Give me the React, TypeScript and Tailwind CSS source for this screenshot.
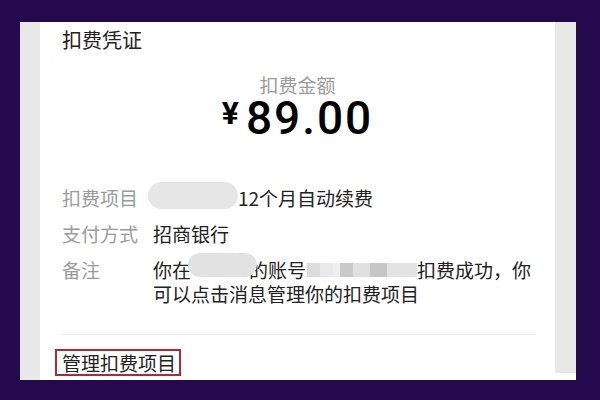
import React from "react";

const cjk = { fontFamily: '"Noto Sans CJK SC", "Noto Sans", sans-serif' };

function Row({ label, children }: { label: string; children: React.ReactNode }) {
  return (
    <div className="flex text-[19px] leading-[24px]">
      <div className="w-[91px] shrink-0 text-[#9b9b9b]">{label}</div>
      <div className="text-[#222]">{children}</div>
    </div>
  );
}

// 打码的像素块
function Pixelated() {
  const cells = [
    { w: 13, c: "#dcdcdc" },
    { w: 13, c: "#e9e9e9" },
    { w: 7, c: "#efefef" },
    { w: 13, c: "#c9c9c9" },
    { w: 17, c: "#e0e0e0" },
    { w: 17, c: "#c6c6c6" },
    { w: 30, c: "#e3e3e3" },
  ];
  return (
    <div className="flex h-[14px] mt-[5px] ml-[1px]">
      {cells.map((cell, i) => (
        <div key={i} className="h-full" style={{ width: cell.w, background: cell.c }} />
      ))}
    </div>
  );
}

export default function App() {
  return (
    <div className="w-[600px] h-[400px] bg-[#24094c] pt-[22px] pl-[20px]" style={cjk}>
      <div className="flex w-[556px] h-[358px] bg-[#e8e8e8]">
        <div className="w-[20px] shrink-0" />
        <div className="w-[515px] bg-white pl-[22px] pr-[20px] flex flex-col">
          {/* 标题 */}
          <div className="mt-[4px] text-[20px] leading-[28px] text-[#222]">扣费凭证</div>

          {/* 金额 */}
          <div className="mt-[19px] text-center text-[19px] leading-[24px] text-[#9b9b9b] -ml-[22px] -mr-[20px]">
            扣费金额
          </div>
          <div
            className="mt-[1px] flex justify-center items-start text-black -ml-[22px] -mr-[20px]"
            style={{ fontFamily: "Roboto, sans-serif" }}
          >
            <span className="text-[32px] leading-[32px] font-bold mt-[-1px] mr-[7px]">¥</span>
            <span className="text-[46px] leading-[40px] tracking-[2px] font-medium">89.00</span>
          </div>

          {/* 明细 */}
          <div className="mt-[48px] flex flex-col">
            <Row label="扣费项目">
              <div className="flex items-center h-[24px]">
                <div className="-ml-[5px] w-[90px] h-[27px] -mt-[5px] rounded-[14px] bg-[#e6e6e6]" />
                <span>12个月自动续费</span>
              </div>
            </Row>
            <div className="mt-[12px]">
              <Row label="支付方式">招商银行</Row>
            </div>
            <div className="mt-[12px]">
              <Row label="备注">
                <div className="flex items-start h-[24px] whitespace-nowrap">
                  <span>你在</span>
                  <div className="relative z-10 -ml-[3px] w-[69px] h-[24px] -mt-[5px] rounded-[12px] bg-[#e2e2e2]" />
                  <span className="-ml-[8px]">的账号</span>
                  <Pixelated />
                  <span>扣费成功，你</span>
                </div>
                <div className="whitespace-nowrap">可以点击消息管理你的扣费项目</div>
              </Row>
            </div>
          </div>

          <div className="mt-[28px] h-px bg-[#ececec]" />

          <div className="mt-[14px] flex">
            <div className="-ml-[7px] border-2 border-[#b3282f] pl-[5px] pr-[3px] text-[19px] leading-[23px] text-[#222]">
              管理扣费项目
            </div>
          </div>
        </div>
        <div className="w-[21px] shrink-0 flex flex-col">
          <div className="flex-1" />
          <div className="h-[7px] bg-white" />
        </div>
      </div>
    </div>
  );
}
